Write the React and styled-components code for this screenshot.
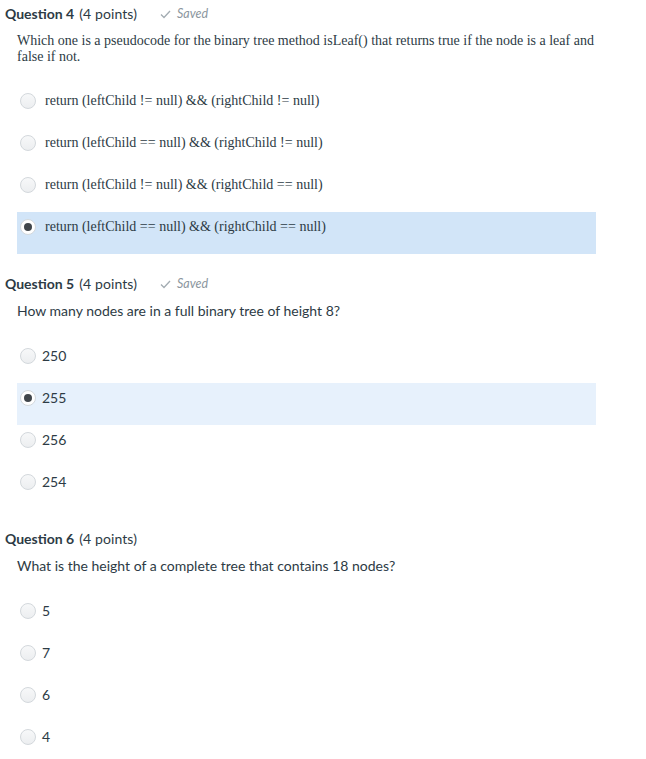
import React from 'react';
import styled, { createGlobalStyle } from 'styled-components';

const GlobalStyle = createGlobalStyle`
  html, body {
    margin: 0;
    padding: 0;
    background: #ffffff;
  }
  body {
    font-family: Lato, "Open Sans", sans-serif;
    color: #2d3b45;
  }
`;

const Page = styled.div`
  width: 646px;
  padding-top: 5px;
`;

const Section = styled.section`
  padding-bottom: 21px;
`;

const Header = styled.div`
  display: flex;
  align-items: center;
  height: 18px;
  padding-left: 5px;
  font-size: 14px;
  line-height: 18px;
  color: #2d3b45;
`;

const Title = styled.span`
  font-weight: 700;
`;

const Points = styled.span`
  margin-left: 5px;
  letter-spacing: 0.1px;
`;

const SavedTag = styled.span`
  display: inline-flex;
  align-items: center;
  gap: 6px;
  margin-left: 23px;
  font-size: 12.5px;
  font-style: italic;
  color: #8b969e;
`;

const Prompt = styled.div`
  margin: 10px 0 0 17px;
  width: 582px;
  font-family: ${(p) => (p.serif ? '"Liberation Serif", "Times New Roman", serif' : 'Lato, sans-serif')};
  font-size: 14px;
  line-height: 16px;
  color: #2d3b45;
`;

const Options = styled.div`
  margin-top: ${(p) => (p.serif ? '21px' : '22px')};
  width: 579px;
  margin-left: 17px;
`;

const Row = styled.label`
  display: flex;
  align-items: flex-start;
  height: 42px;
  box-sizing: border-box;
  padding: 7px 0 0 3px;
  background: ${(p) => (p.selected ? p.tint : 'transparent')};
`;

const Radio = styled.span`
  flex: 0 0 auto;
  width: 16px;
  height: 16px;
  box-sizing: border-box;
  border-radius: 50%;
  border: 1px solid #d3d8dc;
  background: ${(p) => (p.checked ? '#ffffff' : 'linear-gradient(#f7f8f9, #eceef0)')};
  display: flex;
  align-items: center;
  justify-content: center;

  &::after {
    content: '';
    display: ${(p) => (p.checked ? 'block' : 'none')};
    width: 8px;
    height: 8px;
    border-radius: 50%;
    background: #41464b;
  }
`;

const OptionText = styled.span`
  margin-left: ${(p) => (p.serif ? '9px' : '6px')};
  font-family: ${(p) => (p.serif ? '"Liberation Serif", "Times New Roman", serif' : 'Lato, sans-serif')};
  font-size: 14px;
  line-height: 16px;
  color: #2d3b45;
`;

const Check = () => (
  <svg width="11" height="9" viewBox="0 0 11 9">
    <polyline points="1,4.5 4,7.5 10,1" fill="none" stroke="#a3acb2" strokeWidth="1.3" />
  </svg>
);

const questions = [
  {
    n: 4,
    saved: true,
    serif: true,
    tint: '#d2e5f8',
    text: 'Which one is a pseudocode for the binary tree method isLeaf() that returns true if the node is a leaf and false if not.',
    options: [
      'return (leftChild != null) && (rightChild != null)',
      'return (leftChild == null) && (rightChild != null)',
      'return (leftChild != null) && (rightChild == null)',
      'return (leftChild == null) && (rightChild == null)',
    ],
    selected: 3,
  },
  {
    n: 5,
    saved: true,
    tint: '#e7f1fc',
    text: 'How many nodes are in a full binary tree of height 8?',
    options: ['250', '255', '256', '254'],
    selected: 1,
  },
  {
    n: 6,
    saved: false,
    tint: '#e7f1fc',
    text: 'What is the height of a complete tree that contains 18 nodes?',
    options: ['5', '7', '6', '4'],
    selected: -1,
  },
];

const Question = ({ q }) => (
  <Section>
    <Header>
      <Title>Question {q.n}</Title>
      <Points>(4 points)</Points>
      {q.saved && (
        <SavedTag>
          <Check />
          Saved
        </SavedTag>
      )}
    </Header>
    <Prompt serif={q.serif}>{q.text}</Prompt>
    <Options serif={q.serif}>
      {q.options.map((o, i) => (
        <Row key={i} selected={i === q.selected} tint={q.tint}>
          <Radio checked={i === q.selected} />
          <OptionText serif={q.serif}>{o}</OptionText>
        </Row>
      ))}
    </Options>
  </Section>
);

export default function App() {
  return (
    <>
      <GlobalStyle />
      <Page>
        {questions.map((q) => (
          <Question key={q.n} q={q} />
        ))}
      </Page>
    </>
  );
}
